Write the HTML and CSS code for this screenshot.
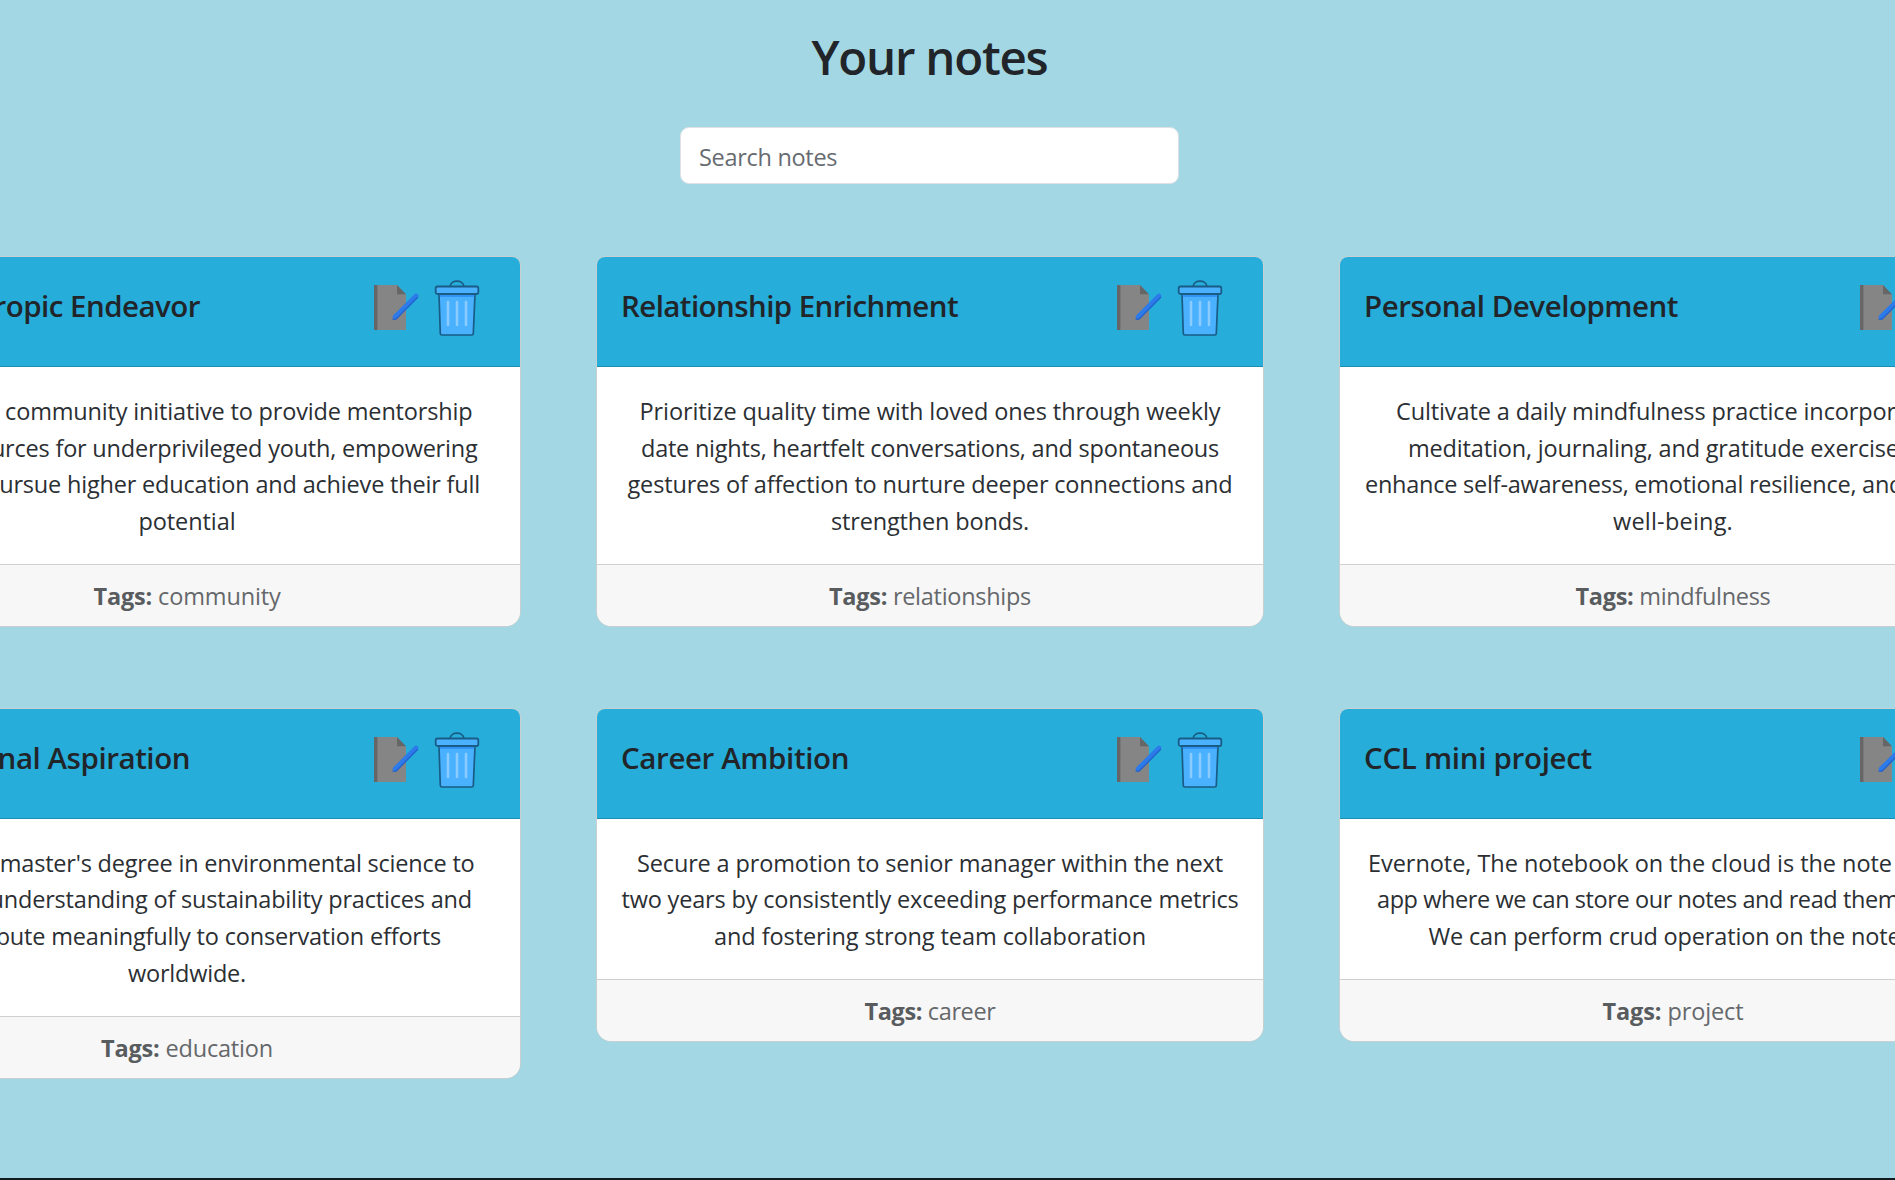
FILE: index.html
```html
<!DOCTYPE html>
<html lang="en">
<head>
<meta charset="utf-8">
<title>Your notes</title>
<link rel="stylesheet" href="styles.css">
</head>
<body>
<svg class="sprite" aria-hidden="true">
  <symbol id="edit" viewBox="0 0 46 48">
    <path fill="#858585" d="M1 1h23l9 10v35H1z"/>
    <path fill="#666" d="M1 1h3.4v45H1zM24 1l9 9.300h-9z"/>
    <path stroke="#2d7bea" stroke-width="4.600" stroke-linecap="round" d="M22 33 43 12"/>
    <path stroke="#2060cc" stroke-width="1.300" stroke-linecap="round" fill="none" d="M20 35.200h3L44.500 13.500"/>
  </symbol>
  <symbol id="trash" viewBox="0 0 46 58">
    <path fill="none" stroke="#195c86" stroke-width="1.600" d="M16 7.500C17 .3 29 .3 30 7.500"/>
    <path fill="#4ab1ff" stroke="#195c86" stroke-width="1.700" stroke-linejoin="round" d="M5 15h36l-1.700 39.500q-.1 1.500-1.500 1.500h-30q-1.400 0-1.500-1.500z"/>
    <path fill="#3095f5" d="M5.700 15h34.600l-.2 3H5.900z"/>
    <rect x="1.700" y="7.500" width="42.600" height="7.500" rx="1.800" fill="#4ab1ff" stroke="#195c86" stroke-width="1.800"/>
    <path stroke="#8accff" stroke-width="2.600" stroke-linecap="round" d="M14 23v23M23 23v23M32 23v23"/>
  </symbol>
</svg>
<main class="page">
  <h1 class="title"><span data-fit="236">Your notes</span></h1>
  <input class="search" type="text" placeholder="Search notes">
  <section class="notes">
    <article class="card">
      <header class="card-head"><h2 class="card-title"><span data-fit="322">Philanthropic Endeavor</span></h2><svg class="edit"><use href="#edit"/></svg><svg class="trash"><use href="#trash"/></svg></header>
      <p class="card-body"><span data-fit="571">Launch a community initiative to provide mentorship</span><br><span data-fit="581">and resources for underprivileged youth, empowering</span><br><span data-fit="586">them to pursue higher education and achieve their full</span><br><span data-fit="97">potential</span></p>
      <footer class="card-foot"><span data-fit="187"><b>Tags:</b> community</span></footer>
    </article>
    <article class="card">
      <header class="card-head"><h2 class="card-title"><span data-fit="337">Relationship Enrichment</span></h2><svg class="edit"><use href="#edit"/></svg><svg class="trash"><use href="#trash"/></svg></header>
      <p class="card-body"><span data-fit="581">Prioritize quality time with loved ones through weekly</span><br><span data-fit="578">date nights, heartfelt conversations, and spontaneous</span><br><span data-fit="605">gestures of affection to nurture deeper connections and</span><br><span data-fit="198">strengthen bonds.</span></p>
      <footer class="card-foot"><span data-fit="202"><b>Tags:</b> relationships</span></footer>
    </article>
    <article class="card">
      <header class="card-head"><h2 class="card-title"><span data-fit="314">Personal Development</span></h2><svg class="edit"><use href="#edit"/></svg><svg class="trash"><use href="#trash"/></svg></header>
      <p class="card-body"><span data-fit="554">Cultivate a daily mindfulness practice incorporating</span><br><span data-fit="530">meditation, journaling, and gratitude exercises to</span><br><span data-fit="616">enhance self-awareness, emotional resilience, and overall</span><br><span data-fit="120">well-being.</span></p>
      <footer class="card-foot"><span data-fit="195"><b>Tags:</b> mindfulness</span></footer>
    </article>
    <article class="card">
      <header class="card-head"><h2 class="card-title"><span data-fit="312">Educational Aspiration</span></h2><svg class="edit"><use href="#edit"/></svg><svg class="trash"><use href="#trash"/></svg></header>
      <p class="card-body"><span data-fit="575">Pursue a master's degree in environmental science to</span><br><span data-fit="570">deepen understanding of sustainability practices and</span><br><span data-fit="508">contribute meaningfully to conservation efforts</span><br><span data-fit="118">worldwide.</span></p>
      <footer class="card-foot"><span data-fit="172"><b>Tags:</b> education</span></footer>
    </article>
    <article class="card">
      <header class="card-head"><h2 class="card-title"><span data-fit="228">Career Ambition</span></h2><svg class="edit"><use href="#edit"/></svg><svg class="trash"><use href="#trash"/></svg></header>
      <p class="card-body"><span data-fit="586">Secure a promotion to senior manager within the next</span><br><span data-fit="617">two years by consistently exceeding performance metrics</span><br><span data-fit="432">and fostering strong team collaboration</span></p>
      <footer class="card-foot"><span data-fit="131"><b>Tags:</b> career</span></footer>
    </article>
    <article class="card">
      <header class="card-head"><h2 class="card-title"><span data-fit="228">CCL mini project</span></h2><svg class="edit"><use href="#edit"/></svg><svg class="trash"><use href="#trash"/></svg></header>
      <p class="card-body"><span data-fit="610">Evernote, The notebook on the cloud is the note making</span><br><span data-fit="592">app where we can store our notes and read them easily.</span><br><span data-fit="489">We can perform crud operation on the notes.</span></p>
      <footer class="card-foot"><span data-fit="141"><b>Tags:</b> project</span></footer>
    </article>
  </section>
</main>
<script src="fit.js"></script>
</body>
</html>
```
FILE: styles.css
```css
* {
  box-sizing: border-box;
}

body {
  margin: 0;
  font-family: "Segoe UI", "Open Sans", "Noto Sans", sans-serif;
  font-size: 23.5px;
  line-height: 36.75px;
  color: #2b2f33;
  background: #a3d7e3;
}

.sprite {
  display: none;
}

.page {
  display: flex;
  flex-direction: column;
  align-items: center;
  height: 1180px;
  padding-top: 27px;
  overflow: hidden;
  border-bottom: 2px solid #111b1f;
}

.title {
  margin: 0 0 41px;
  padding-right: 36px;
  font-size: 47.5px;
  font-weight: 600;
  line-height: 59px;
  color: #212529;
}

.search {
  flex: none;
  width: 499px;
  height: 57px;
  margin-right: 36px;
  padding: 3px 18px 0;
  font: inherit;
  letter-spacing: -0.3px;
  color: #212529;
  background: #fff;
  border: 1px solid #dee2e6;
  border-radius: 9px;
}

.search::placeholder {
  color: #676b70;
  opacity: 1;
}

.notes {
  display: grid;
  grid-template-columns: repeat(3, 668px);
  column-gap: 75px;
  row-gap: 80.6px;
  align-items: start;
  align-self: flex-start;
  margin: 72px 0 0 -147px;
}

.card {
  background: #fff;
  background-clip: padding-box;
  border: 1px solid #c9cfd0;
  border-radius: 9px 9px 15px 15px;
  overflow: hidden;
}

.card-head {
  display: flex;
  align-items: flex-start;
  height: 110.4px;
  padding: 22px 40px 0 24px;
  background: #26adda;
  border-bottom: 1px solid #1f8eb3;
}

.card-title {
  flex: 1;
  margin: 8px 0 0;
  font-size: 29.5px;
  font-weight: 600;
  line-height: 37px;
  color: #212529;
}

.edit {
  width: 46px;
  height: 48px;
  margin: 5px 15px 0 0;
}

.trash {
  width: 46px;
  height: 58px;
}

.card-body {
  margin: 0;
  padding: 25.6px 0 24px;
  text-align: center;
  white-space: nowrap;
}

.card-foot {
  height: 62px;
  padding-top: 13.4px;
  text-align: center;
  color: #65686b;
  background: #f7f7f7;
  border-top: 1px solid #cfcfcf;
}

.card-foot b {
  font-weight: 700;
  color: #595c5f;
}

[data-fit] {
  white-space: nowrap;
}
```
FILE: fit.js
```js
document.querySelectorAll('[data-fit]').forEach(function (line) {
  var natural = line.getBoundingClientRect().width;
  var count = line.textContent.length;
  line.style.letterSpacing = (Number(line.dataset.fit) - natural) / count + 'px';
});
```
